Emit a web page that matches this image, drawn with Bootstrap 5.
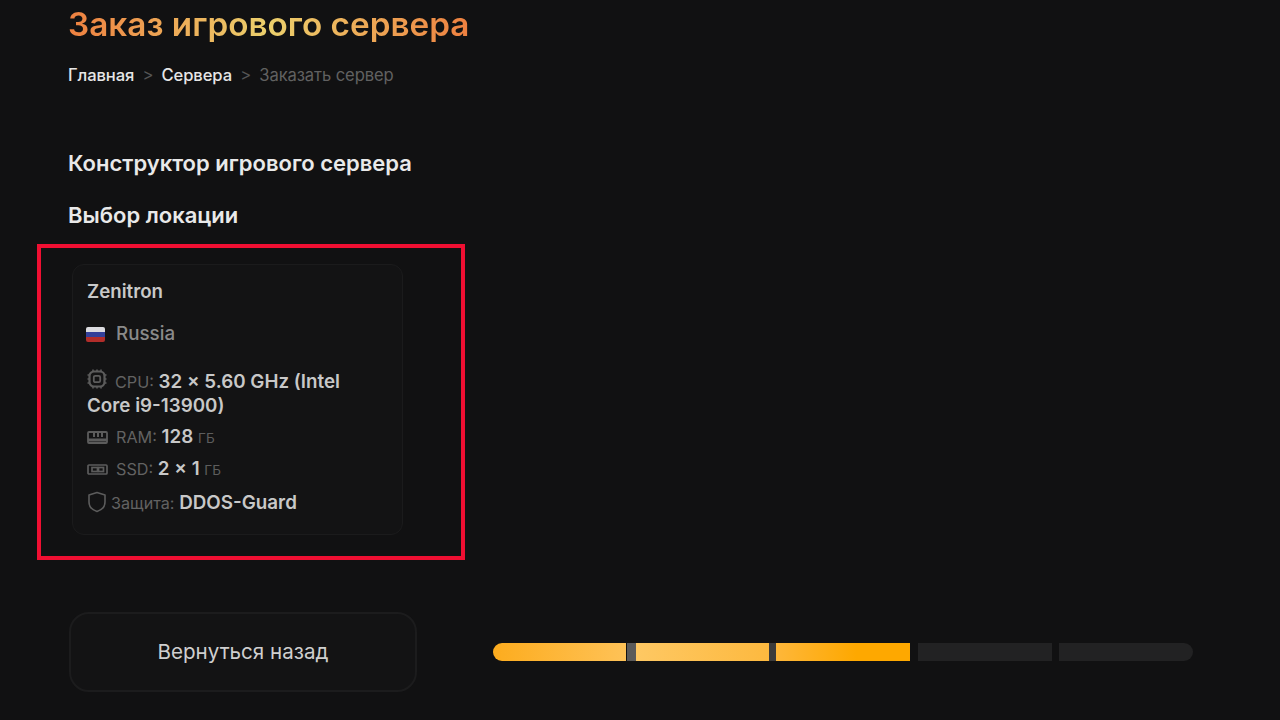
<!DOCTYPE html>
<html lang="ru"><head><meta charset="utf-8"><title>Заказ игрового сервера</title>
<link href="https://cdn.jsdelivr.net/npm/bootstrap@5.3.0/dist/css/bootstrap.min.css" rel="stylesheet">
<style>
html,body{height:720px;overflow:hidden}
body{background:#111112;font-family:Inter,"Liberation Sans",sans-serif;color:#e8e8e8}
.page-wrap{padding:0 0 0 68px;height:720px}
.page-title{font-size:33.3px;line-height:36px;font-weight:600;margin:6px 0 0;width:max-content;background:linear-gradient(90deg,#ee8040 0%,#ecd06c 50%,#ee8040 100%);-webkit-background-clip:text;background-clip:text;color:transparent}
.crumbs{font-size:16.6px;line-height:20px;margin-top:23px;gap:8.200px;letter-spacing:-.1px}
.crumbs a{color:#e6e6e6;text-decoration:none;font-weight:500}
.crumbs .sep{color:#555}
.crumbs .here{color:#616161}
.sec-title{font-size:22px;line-height:26px;font-weight:600;color:#e9e9e9;margin:0}
.sec-one{margin-top:65px}
.sec-two{margin-top:26px}
.mark-box{width:428px;height:316px;border:4px solid #f00f32;margin:16px 0 0 -31px;padding:16px 0 0 31px}
.loc-tile{width:331px;height:271px;background:#131314;border:1px solid #1b1b1c;border-radius:12px;padding:15px 14px;color:#c4c4c4}
.loc-name{font-size:18.7px;line-height:24px;font-weight:600;color:#c9c9c9}
.loc-land{font-size:18.8px;line-height:24px;font-weight:500;color:#8a8a8a;margin-top:18px;margin-left:-1px;gap:11px}
.flag{display:block;width:19px;height:15px;border-radius:2px;background:linear-gradient(#dcdce0 0 33%,#33409a 33% 66%,#b22d2a 66%)}
.spec{font-size:18.8px;line-height:24px;font-weight:600;color:#c8c8c8;padding-right:30px}
.spec svg{display:inline-block;vertical-align:-1px;margin-right:8px}
.spec-lbl{font-size:16.2px;font-weight:400;color:#626262}
.spec-unit{font-size:13.6px;font-weight:400;color:#5d5d5d}
.spec-cpu{margin-top:23px}
.spec-ram{margin-top:7px}
.spec-ssd{margin-top:7px}
.spec-def{margin-top:9px}
.spec-def svg{margin-right:4px;vertical-align:-4px}
.bottom-row{margin-top:52px;margin-left:1px}
.back-btn{width:348px;height:80px;background:#131314;border:2px solid #1c1c1d;border-radius:20px;color:#cfcfcf;font-size:20.6px;font-weight:400;font-family:inherit}
.back-btn:hover{background:#131314;color:#cfcfcf;border-color:#1c1c1d}
.stepper{margin-left:76px;width:700px;height:18px;margin-top:-1px;gap:7px}
.step{flex:1 1 0;height:18px;background:#222223}
.step-a{flex:0 0 133px;border-radius:9px 0 0 9px;background:linear-gradient(90deg,#fdac1e,#fec257)}
.gap-a{flex:0 0 9px;margin:0 0 0 -6px;background:#5a5a5a}
.step-b{flex:0 0 133px;margin-left:-7px;background:linear-gradient(90deg,#fec863,#fdb93f)}
.gap-b{flex:0 0 7px;margin:0 -7px;background:#3b3b3b}
.step-c{flex:0 0 134px;margin-right:1px;background:linear-gradient(90deg,#feb73a,#fea800 60%)}
.step-e{border-radius:0 9px 9px 0}
</style></head>
<body>
<main class="page-wrap">
<h1 class="page-title">Заказ игрового сервера</h1>
<nav class="crumbs d-flex align-items-center"><a href="#">Главная</a><span class="sep">&gt;</span><a href="#">Сервера</a><span class="sep">&gt;</span><span class="here">Заказать сервер</span></nav>
<h2 class="sec-title sec-one">Конструктор игрового сервера</h2>
<h2 class="sec-title sec-two">Выбор локации</h2>
<div class="mark-box">
<div class="loc-tile">
<div class="loc-name">Zenitron</div>
<div class="loc-land d-flex align-items-center"><span class="flag"></span><span>Russia</span></div>
<div class="spec spec-cpu"><svg width="20" height="20" viewBox="0 0 20 20" fill="none" stroke="#5c5c5c" stroke-width="2.200"><rect x="2.500" y="2.500" width="15" height="15" rx="4.500"/><rect x="6.800" y="6.800" width="6.400" height="6.400" rx="1.500" stroke-width="1.800"/><path d="M6 .5v2M10 .5v2M14 .5v2M6 17.500v2M10 17.500v2M14 17.500v2M.5 6h2M.5 10h2M.5 14h2M17.500 6h2M17.500 10h2M17.500 14h2" stroke-width="1.600"/></svg><span class="spec-lbl">CPU:</span> 32 × 5.60 GHz (Intel Core i9-13900)</div>
<div class="spec spec-ram"><svg width="21" height="13" viewBox="0 0 21 13" fill="none" stroke="#5c5c5c" stroke-width="1.800"><rect x="1" y="1" width="19" height="11" rx="1"/><path d="M1 9h19" stroke-width="3"/><path d="M7 1v5M11 1v5M15 1v5" stroke-width="2"/></svg><span class="spec-lbl">RAM:</span> 128 <span class="spec-unit">ГБ</span></div>
<div class="spec spec-ssd"><svg width="21" height="12" viewBox="0 0 21 12" fill="none" stroke="#5c5c5c" stroke-width="1.700"><rect x="1" y="1" width="19" height="9" rx="1"/><rect x="5" y="3.500" width="5.500" height="4"/><rect x="11.500" y="3.500" width="5" height="4"/></svg><span class="spec-lbl">SSD:</span> 2 × 1 <span class="spec-unit">ГБ</span></div>
<div class="spec spec-def"><svg width="20" height="22" viewBox="0 0 20 22" fill="none" stroke="#5c5c5c" stroke-width="1.600"><path d="M10 1.500 2 4v7c0 4.500 3.500 8 8 9.500 4.500-1.500 8-5 8-9.500V4z" stroke-linejoin="round"/></svg><span class="spec-lbl">Защита:</span> DDOS-Guard</div>
</div>
</div>
<div class="bottom-row d-flex align-items-center">
<button type="button" class="btn back-btn">Вернуться назад</button>
<div class="stepper d-flex">
<div class="step step-a"></div><div class="step gap-a"></div><div class="step step-b"></div><div class="step gap-b"></div><div class="step step-c"></div><div class="step"></div><div class="step step-e"></div>
</div>
</div>
</main>
<script src="https://cdn.jsdelivr.net/npm/bootstrap@5.3.0/dist/js/bootstrap.bundle.min.js"></script>
</body></html>
